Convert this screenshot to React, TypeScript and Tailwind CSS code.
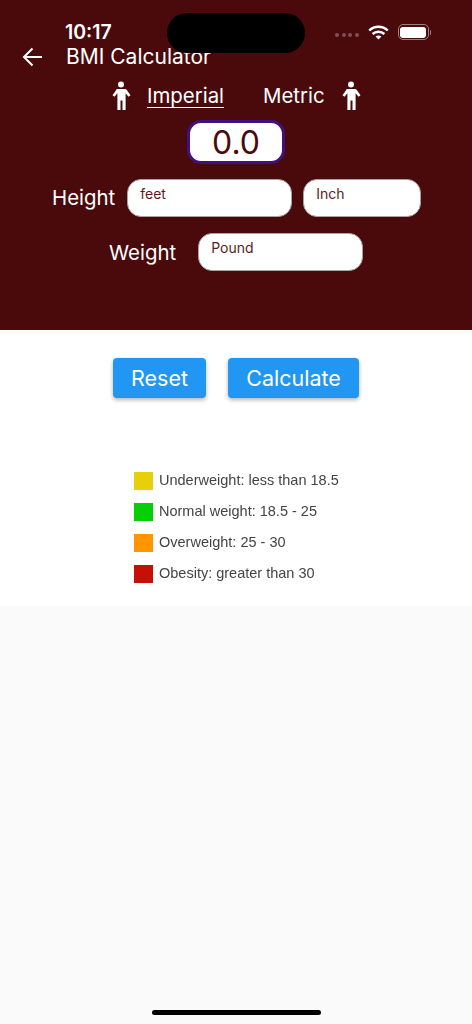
function Person() {
  return (
    <svg width="20" height="30" viewBox="0 0 20 30" fill="#fff">
      <circle cx="10" cy="3.500" r="3" />
      <path d="M6 8h8c.8 0 1.300.3 1.800.9l3.700 5.300-2 1.500-2.900-3.400V29h-3.100V19.500H9.500V29H6.400V12.300l-2.900 3.400-2-1.500 3.700-5.300C5.700 8.300 5.500 8 6 8z" />
    </svg>
  )
}

function Input({ label, className }: { label: string; className: string }) {
  return (
    <div className={`h-[38px] rounded-[14px] bg-white border border-[#a9a3a3] px-[12px] pt-[5px] text-[14px] leading-[18px] text-[#5a1c1d] ${className}`}>
      {label}
    </div>
  )
}

const legend = [
  { color: 'bg-[#e8cf0c]', text: 'Underweight: less than 18.5' },
  { color: 'bg-[#06cf06]', text: 'Normal weight: 18.5 - 25' },
  { color: 'bg-[#ff9500]', text: 'Overweight: 25 - 30' },
  { color: 'bg-[#c80f05]', text: 'Obesity: greater than 30' },
]

export default function App() {
  return (
    <div className="relative min-h-[1024px] bg-[#fafafa] font-['Inter',sans-serif] overflow-hidden">
      {/* Dynamic island */}
      <div className="absolute left-[167px] top-[13px] w-[138px] h-[40px] rounded-[20px] bg-black z-10" />

      {/* Maroon header */}
      <div className="h-[330px] bg-[#4a0a0b] text-white pt-[22px]">
        <div className="flex items-center justify-between h-[20px] pl-[65px] pr-[41px]">
          <span className="text-[19.500px] font-semibold leading-[20px]">10:17</span>
          <div className="flex items-center gap-[9px]">
            <div className="flex gap-[2.500px] mt-[5px]">
              <span className="w-[4px] h-[4px] rounded-full bg-[#7d5253]" />
              <span className="w-[4px] h-[4px] rounded-full bg-[#7d5253]" />
              <span className="w-[4px] h-[4px] rounded-full bg-[#7d5253]" />
              <span className="w-[4px] h-[4px] rounded-full bg-[#7d5253]" />
            </div>
            <svg width="21" height="15" viewBox="0 0 21 15" fill="none" stroke="#fff" strokeWidth="2.4">
              <path d="M1.200 5.500c5.300-5 13.300-5 18.600 0" />
              <path d="M4.600 9c3.400-3 8.400-3 11.800 0" />
              <path d="M10.500 14.500l-2.900-3c1.700-1.400 4.100-1.400 5.800 0z" fill="#fff" stroke="none" />
            </svg>
            <div className="flex items-center gap-[1px]">
              <div className="w-[31px] h-[16px] rounded-[5px] border border-[#9c7e7f] p-[1.500px]">
                <div className="w-full h-full rounded-[3px] bg-white" />
              </div>
              <div className="w-[1.500px] h-[5px] rounded-r bg-[#9c7e7f]" />
            </div>
          </div>
        </div>

        <div className="flex items-center h-[30px] pl-[22px]">
          <svg width="21" height="20" viewBox="0 0 21 20" fill="none" stroke="#fff" strokeWidth="2">
            <path d="M20 10H2M10.500 1.500 2 10l8.500 8.500" />
          </svg>
          <span className="ml-[23px] text-[21px] leading-[30px]">BMI Calculator</span>
        </div>

        <div className="flex items-center h-[36px] mt-[6px] pl-[111px]">
          <Person />
          <span className="ml-[16px] text-[20.400px] underline underline-offset-[4px] decoration-1">Imperial</span>
          <span className="ml-[39px] text-[20.400px]">Metric</span>
          <div className="ml-[16px]"><Person /></div>
        </div>

        <div className="flex justify-center mt-[6px]">
          <div className="w-[98px] h-[44px] pt-[1px] rounded-[14px] bg-white border-[3px] border-[#42107e] flex items-center justify-center text-[32px] leading-none text-[#4a0a0b]">
            0.0
          </div>
        </div>

        <div className="flex items-center mt-[15px] pl-[52px]">
          <span className="text-[20.400px]">Height</span>
          <Input label="feet" className="ml-[12px] w-[165px]" />
          <Input label="Inch" className="ml-[11px] w-[118px]" />
        </div>

        <div className="flex items-center mt-[16px] pl-[109px]">
          <span className="text-[20.400px] pt-[2px]">Weight</span>
          <Input label="Pound" className="ml-[22px] w-[165px]" />
        </div>
      </div>

      {/* Buttons + legend */}
      <div className="h-[276px] bg-white">
        <div className="flex justify-center gap-[22px] pt-[28px]">
          <button className="w-[93px] h-[40px] rounded-[4px] bg-[#2196f3] text-white text-[21.500px] shadow-[0_2px_4px_rgba(0,0,0,0.3)]">Reset</button>
          <button className="w-[131px] h-[40px] rounded-[4px] bg-[#2196f3] text-white text-[21.500px] shadow-[0_2px_4px_rgba(0,0,0,0.3)]">Calculate</button>
        </div>
        <div className="flex flex-col gap-[12px] pl-[134px] mt-[73px] font-['Liberation_Sans',sans-serif] text-[14.500px] text-[#444] blur-[0.5px]">
          {legend.map((row) => (
            <div key={row.text} className="flex items-center h-[19px]">
              <span className={`w-[19px] h-[18px] ${row.color}`} />
              <span className="ml-[6px] leading-[19px]">{row.text}</span>
            </div>
          ))}
        </div>
      </div>

      {/* Home indicator */}
      <div className="absolute left-[152px] top-[1010px] w-[169px] h-[5px] rounded-full bg-black" />
    </div>
  )
}
